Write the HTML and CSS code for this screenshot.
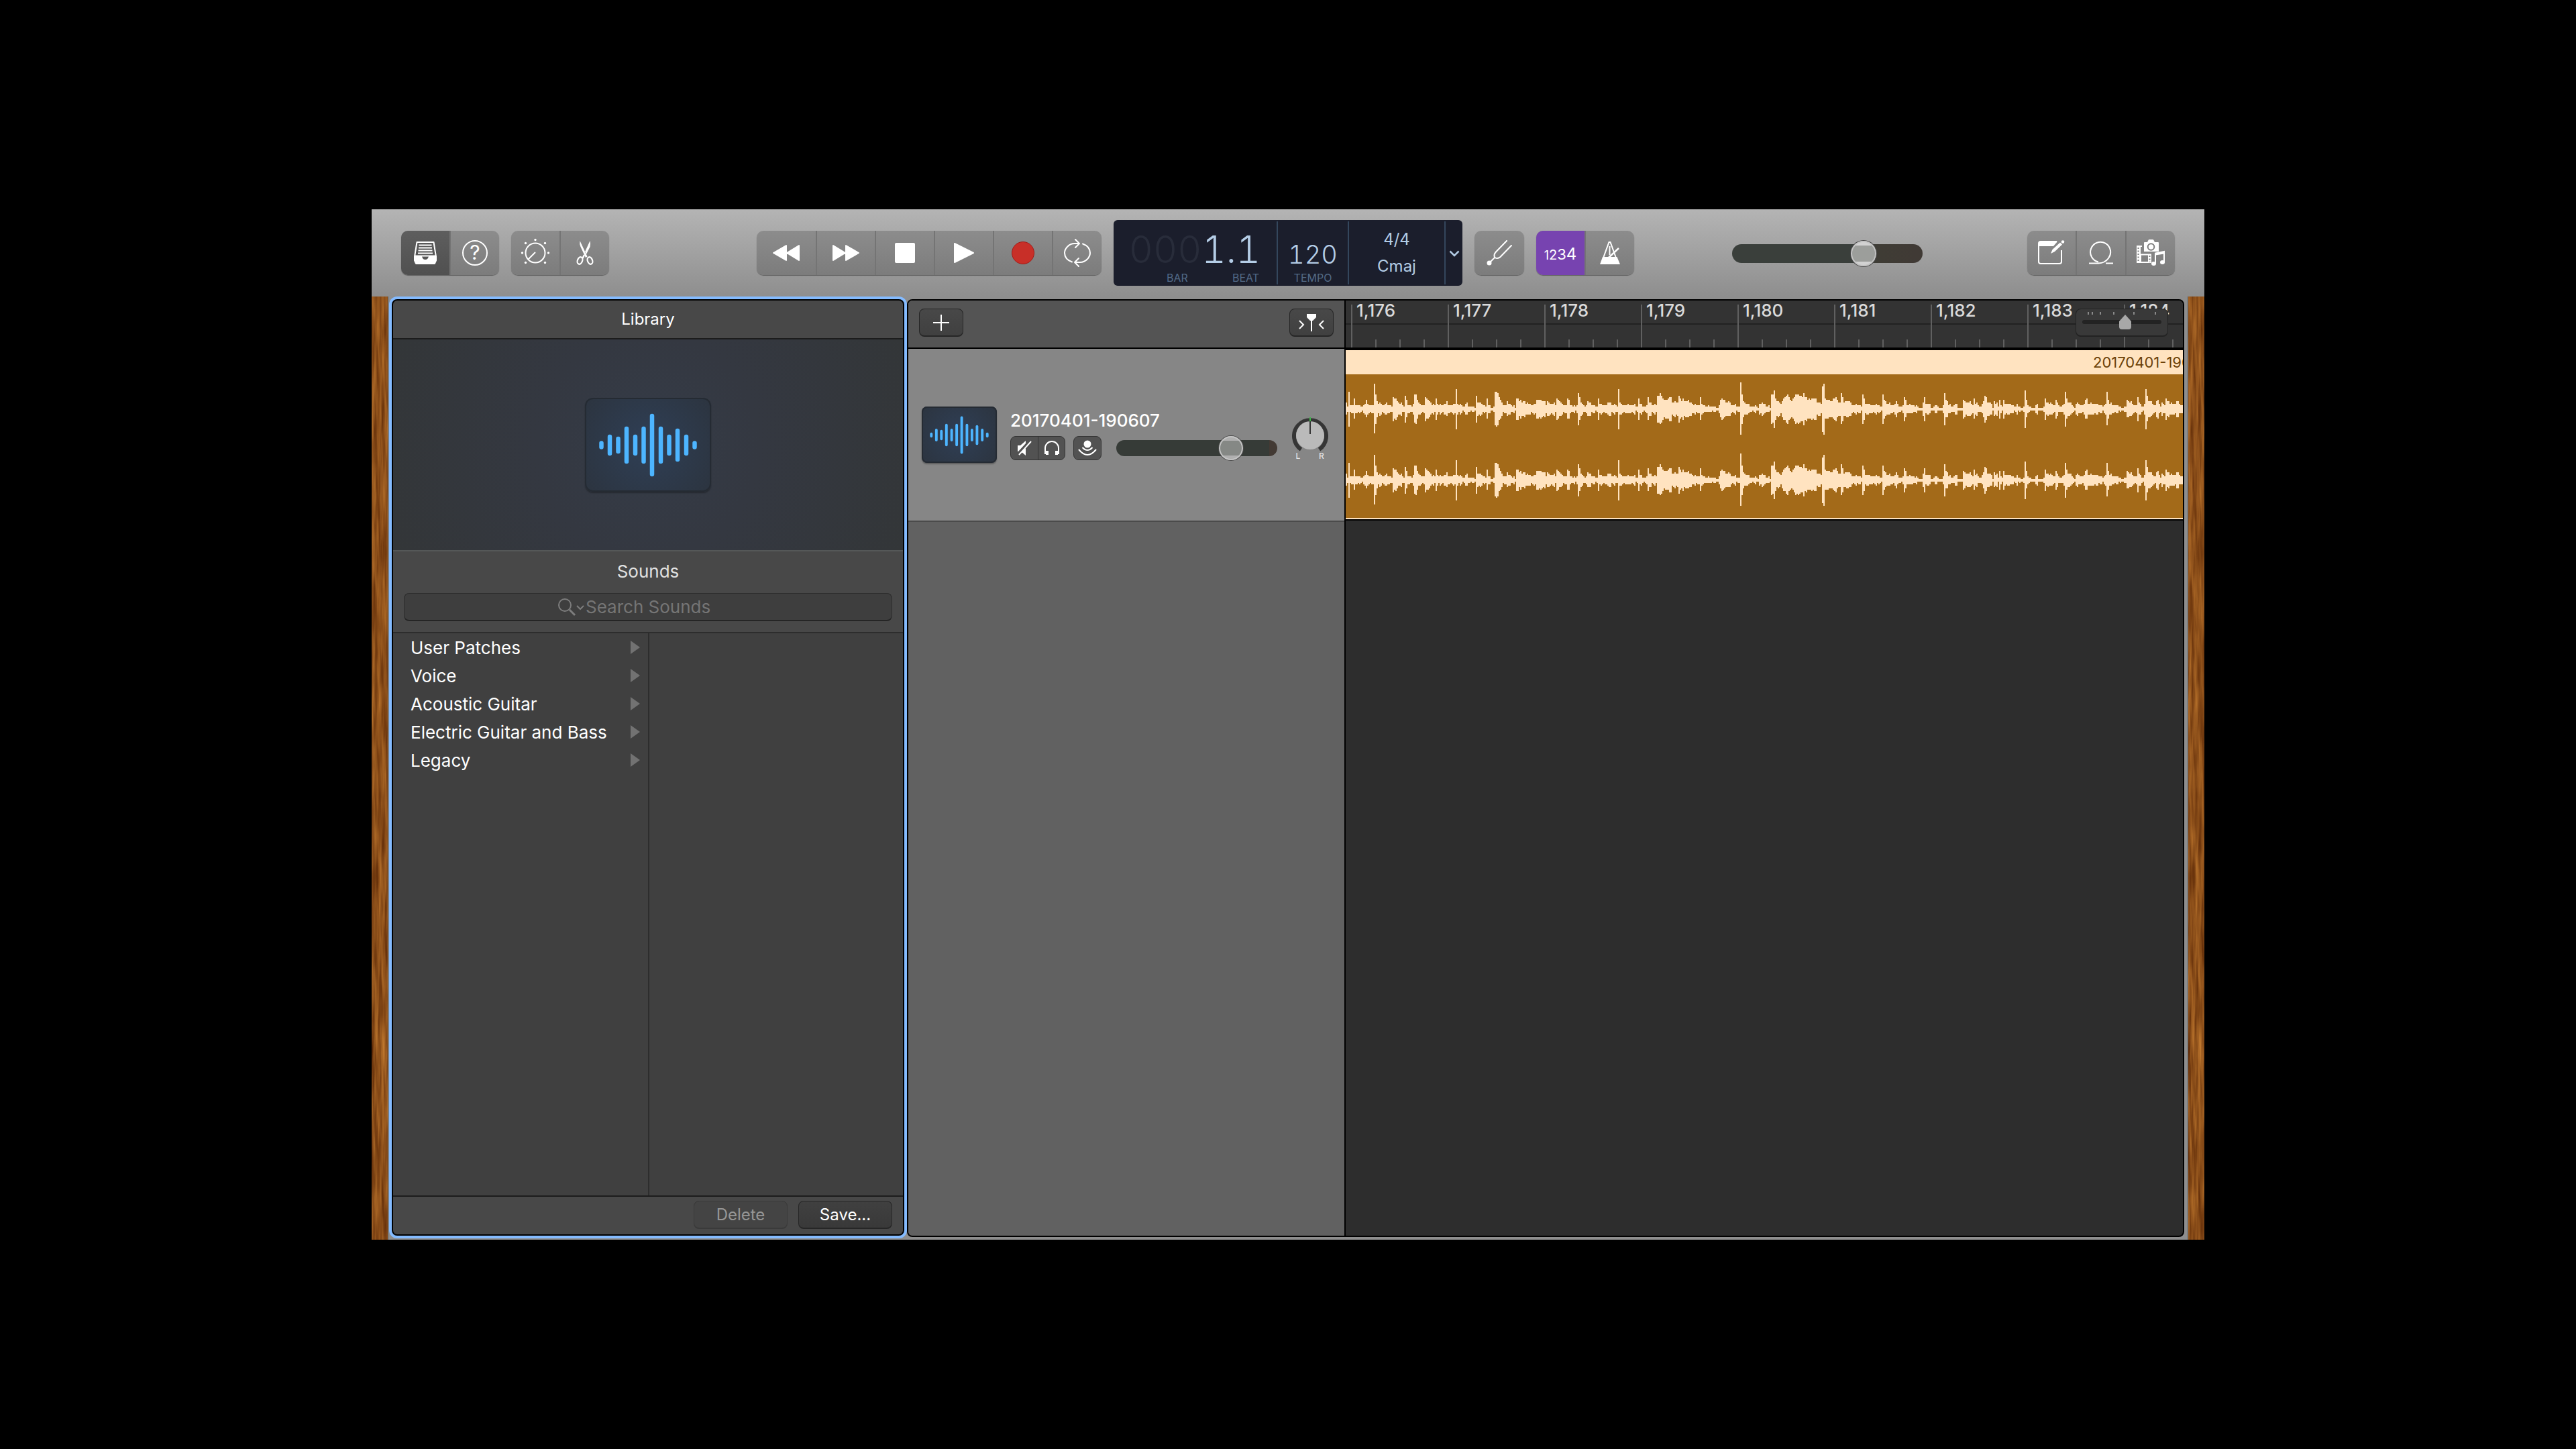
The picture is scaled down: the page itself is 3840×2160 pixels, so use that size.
FILE: index.html
```html
<!DOCTYPE html>
<html lang="en">
<head>
  <meta charset="UTF-8">
  <title>20170401-190607 - Tracks</title>
  <link rel="stylesheet" href="styles.css">
</head>
<body>
  <svg class="defs" aria-hidden="true">
    <defs>
      <filter id="wood-grain" x="0" y="0" width="100%" height="100%" color-interpolation-filters="sRGB">
        <feTurbulence type="fractalNoise" baseFrequency="0.2 0.012" numOctaves="3" seed="7" />
        <feColorMatrix type="matrix" values="0.5 0 0 0 0.3  0.4 0 0 0 0.11  0.2 0 0 0 0  0 0 0 0 1" />
      </filter>
      <symbol id="audio-wave" viewBox="0 0 146 95">
        <path d="M3.5 44.5v6M16 35v25M28.5 38v19M41 23v49M54 35v25M66.5 23v49M79 4v87M92 23v49M104.5 35v25M117 26v43M130 35v25M142.5 44.5v6" fill="none" stroke="#4db5ff" stroke-width="6.5" stroke-linecap="round" />
      </symbol>
    </defs>
  </svg>

  <main class="window">
    <header class="toolbar">
      <div class="button-group">
        <button class="tool active" aria-label="Library">
          <svg width="36" height="36" viewBox="-1 -1 36 36">
            <path d="M4.5 1h25l3.3 20.5H1.2z" fill="none" stroke="#fff" stroke-width="2" stroke-linejoin="round" />
            <path d="M7.5 5.5h19M7 9.5h20M6.5 13.5h21M6 17.5h22" stroke="#fff" stroke-width="2" />
            <path d="M0 21.5h11.5c1 0 .5 5.5 5.5 5.5s4.5-5.5 5.5-5.5H34v7L32 33q-.5 1-1.5 1h-27Q2.5 34 2 33L0 28.5z" fill="#fff" />
          </svg>
        </button>
        <button class="tool" aria-label="Quick Help">
          <svg width="40" height="40" viewBox="-20 -20 40 40">
            <circle r="18" fill="none" stroke="#fff" stroke-width="2" />
            <text class="help-mark" x="0" y="10" text-anchor="middle">?</text>
          </svg>
        </button>
      </div>
      <div class="button-group">
        <button class="tool" aria-label="Smart Controls">
          <svg width="44" height="44" viewBox="-22 -22 44 44">
            <circle r="14.5" fill="none" stroke="#fff" stroke-width="2" />
            <path d="M0-1L-10.5 9.5" stroke="#fff" stroke-width="2" />
            <g fill="#fff">
              <circle cx="-19.5" r="1.7" /><circle cx="19.5" r="1.7" /><circle cy="-19.5" r="1.7" />
              <circle cx="-14.5" cy="-14.5" r="1.7" /><circle cx="14.5" cy="-14.5" r="1.7" />
              <circle cx="-14.5" cy="14.5" r="1.7" /><circle cx="14.5" cy="14.5" r="1.7" />
            </g>
          </svg>
        </button>
        <button class="tool" aria-label="Editors">
          <svg width="28" height="38" viewBox="-14 -19 28 38">
            <path d="M-7.5-18q-1 5 1 9L1 7l2.5-1.5z M7.5-18q1.2 4 0 9L2.2 1.5-.3-1z" fill="#fff" />
            <path d="M-1 3L-3.5 8" stroke="#fff" stroke-width="2.5" />
            <ellipse cx="-7.5" cy="11.5" rx="3.6" ry="5.5" transform="rotate(22 -7.5 11.5)" fill="none" stroke="#fff" stroke-width="2.2" />
            <ellipse cx="7.5" cy="11.5" rx="3.6" ry="5.5" transform="rotate(-22 7.5 11.5)" fill="none" stroke="#fff" stroke-width="2.2" />
          </svg>
        </button>
      </div>

      <div class="spacer-left"></div>

      <div class="button-group transport">
        <button class="tool" aria-label="Rewind">
          <svg width="42" height="26" viewBox="0 0 42 26">
            <path d="M21 2v22L2 13zM40 2v22L22 13z" fill="#fff" stroke="#fff" stroke-width="2" stroke-linejoin="round" />
          </svg>
        </button>
        <button class="tool" aria-label="Forward">
          <svg width="42" height="26" viewBox="0 0 42 26">
            <path d="M21 2v22l19-11zM2 2v22l18-11z" fill="#fff" stroke="#fff" stroke-width="2" stroke-linejoin="round" />
          </svg>
        </button>
        <button class="tool" aria-label="Stop">
          <svg width="30" height="30" viewBox="0 0 30 30"><rect width="30" height="30" rx="2" fill="#fff" /></svg>
        </button>
        <button class="tool" aria-label="Play">
          <svg width="30" height="30" viewBox="0 0 30 30">
            <path d="M1 1v28l28-14z" fill="#fff" stroke="#fff" stroke-width="2" stroke-linejoin="round" />
          </svg>
        </button>
        <button class="tool" aria-label="Record">
          <svg width="34" height="34" viewBox="0 0 34 34"><circle cx="17" cy="17" r="16.5" fill="#c82f28" stroke="#a01c18" /></svg>
        </button>
        <button class="tool" aria-label="Cycle">
          <svg width="42" height="42" viewBox="-21 -21 42 42" fill="none" stroke="#fff" stroke-width="2" stroke-linecap="round" stroke-linejoin="round">
            <path d="M-8 13.5C-15 11-19 6-19 0S-13-14-4-14H3M-3-20l6 6-6 6" />
            <path d="M8-13.5C15-11 19-6 19 0S13 14 4 14H-4M2 8l-6 6 6 6" />
          </svg>
        </button>
      </div>

      <section class="lcd" aria-label="Transport display">
        <div class="lcd-position">
          <div class="lcd-value large"><span class="dim">000</span>1.1</div>
          <div class="lcd-labels"><span>BAR</span><span>BEAT</span></div>
        </div>
        <div class="lcd-tempo">
          <div class="lcd-value">120</div>
          <div class="lcd-labels"><span>TEMPO</span></div>
        </div>
        <div class="lcd-signature">
          <span>4/4</span>
          <span>Cmaj</span>
        </div>
        <button class="lcd-menu" aria-label="Display mode">
          <svg width="16" height="10" viewBox="0 0 16 10"><path d="M1.5 1.5L8 8l6.5-6.5" fill="none" stroke="#b4cde6" stroke-width="2.5" /></svg>
        </button>
      </section>

      <div class="button-group">
        <button class="tool" aria-label="Tuner">
          <svg width="38" height="38" viewBox="0 0 38 38" fill="none" stroke="#fff" stroke-width="2" stroke-linecap="round">
            <path d="M30 1L13.5 18q-3.5 4-1 8 4 2.5 8-1L37 8" />
            <path d="M12 26L5 33" />
            <circle cx="4" cy="34" r="2.5" fill="#fff" />
          </svg>
        </button>
      </div>
      <div class="button-group">
        <button class="tool count-in" aria-label="Count in"><span class="n1">1</span><span class="n2">2</span><span class="n3">3</span><span class="n4">4</span></button>
        <button class="tool" aria-label="Metronome">
          <svg width="32" height="36" viewBox="0 0 32 36">
            <path d="M6.5 24L14.5 2h2l8 22" fill="none" stroke="#fff" stroke-width="2" />
            <path d="M15.5 8v13" stroke="#fff" stroke-width="2" />
            <path d="M14 25L29 11" stroke="#fff" stroke-width="2.5" />
            <path d="M5 24h21.5L31 35H1z" fill="#fff" />
          </svg>
        </button>
      </div>

      <div class="spacer-middle"></div>
      <input class="volume master" type="range" min="0" max="100" value="72" aria-label="Master volume">
      <div class="spacer-right"></div>

      <div class="button-group">
        <button class="tool" aria-label="Note Pad">
          <svg width="40" height="38" viewBox="0 0 40 38">
            <path d="M35 15v17q0 3-3 3H4q-3 0-3-3V5q0-3 3-3h24" fill="none" stroke="#fff" stroke-width="2" />
            <path d="M1 9V5q0-3 3-3h25l-6 7z" fill="#fff" />
            <path d="M19 20l2.5-6L33 3.5l3 3L25 17z" fill="#fff" />
            <circle cx="37" cy="2.5" r="2.3" fill="#fff" />
          </svg>
        </button>
        <button class="tool" aria-label="Loop Browser">
          <svg width="36" height="36" viewBox="0 0 36 36" fill="none" stroke="#fff" stroke-width="2">
            <path d="M0 33.5H14Q24 33 29 26A15 15 0 1 0 14 31.5M25 33.5h11" />
          </svg>
        </button>
        <button class="tool" aria-label="Media Browser">
          <svg width="44" height="40" viewBox="0 0 44 40">
            <path d="M1 9h8v2H7v22h11V23h5v12H1z" fill="#fff" />
            <path d="M7 22.5h15V34H7z" fill="none" stroke="#fff" stroke-width="2" />
            <path d="M3.5 12v22M20.5 24v10" stroke="#7b7b7b" stroke-width="2" stroke-dasharray="2 2.5" />
            <path d="M12 5q0-1 1-1h4l1.5-3q.5-1 1.5-1h5q1 0 1.5 1L28 4h5q1 0 1 1v13H12z" fill="#fff" />
            <circle cx="22.5" cy="11" r="4.8" fill="none" stroke="#7d7d7d" stroke-width="2" />
            <path d="M29 36V20.5L42 18v16.5" fill="none" stroke="#fff" stroke-width="2" />
            <path d="M29 20l13-2v3.5l-13 2z" fill="#fff" />
            <ellipse cx="26.5" cy="36" rx="3.5" ry="3" fill="#fff" /><ellipse cx="39.5" cy="34" rx="3.5" ry="3" fill="#fff" />
          </svg>
        </button>
      </div>
    </header>

    <div class="workspace">
      <svg class="wood" aria-hidden="true"><rect width="100%" height="100%" filter="url(#wood-grain)" /></svg>

      <aside class="library">
        <h1 class="library-title">Library</h1>
        <div class="preview">
          <div class="preview-tile"><svg><use href="#audio-wave" /></svg></div>
        </div>
        <div class="sounds">
          <h2>Sounds</h2>
          <label class="search">
            <svg width="42" height="28" viewBox="0 0 42 28" fill="none" stroke="#7d7d7d" stroke-width="2">
              <circle cx="11" cy="11" r="9" />
              <path d="M18 18l8 8" stroke-width="3" />
              <path d="M29 12l5 5 5-5" />
            </svg>
            <input type="search" placeholder="Search Sounds" aria-label="Search Sounds">
          </label>
        </div>
        <div class="browser">
          <ul class="browser-column">
            <li><button>User Patches</button></li>
            <li><button>Voice</button></li>
            <li><button>Acoustic Guitar</button></li>
            <li><button>Electric Guitar and Bass</button></li>
            <li><button>Legacy</button></li>
          </ul>
        </div>
        <footer class="library-footer">
          <button class="push" disabled>Delete</button>
          <button class="push">Save...</button>
        </footer>
      </aside>

      <section class="arrange">
        <div class="track-list">
          <div class="track-list-bar">
            <button class="small-push" aria-label="Add track">
              <svg width="24" height="24" viewBox="0 0 24 24"><path d="M12 0v24M0 12h24" stroke="#fff" stroke-width="2" /></svg>
            </button>
            <button class="small-push" aria-label="Catch playhead">
              <svg width="40" height="28" viewBox="0 0 40 28">
                <path d="M13 1h14v5l-5 5h-1v16h-2V11h-1l-5-5z" fill="#fff" />
                <path d="M2 11l6 6-6 6M38 11l-6 6 6 6" fill="none" stroke="#fff" stroke-width="2" />
              </svg>
            </button>
          </div>
          <div class="track">
            <div class="track-icon"><svg><use href="#audio-wave" /></svg></div>
            <div class="track-info">
              <div class="track-name">20170401-190607</div>
              <div class="track-controls">
                <div class="track-buttons">
                  <button aria-label="Mute">
                    <svg width="24" height="24" viewBox="0 0 24 24">
                      <path d="M2 8h4l8-7v4L3 17H2zM14 12v11l-6-5z" fill="#fff" />
                      <path d="M22 2L4 22" stroke="#fff" stroke-width="2" />
                    </svg>
                  </button>
                  <button aria-label="Solo">
                    <svg width="24" height="24" viewBox="0 0 24 24">
                      <path d="M2 21V12a10 10 0 0 1 20 0v9" fill="none" stroke="#fff" stroke-width="2" />
                      <path d="M5 16v6M19 16v6" stroke="#fff" stroke-width="4" />
                    </svg>
                  </button>
                </div>
                <div class="track-buttons">
                  <button aria-label="Input monitoring">
                    <svg width="28" height="24" viewBox="0 0 28 24">
                      <circle cx="14" cy="6" r="5.5" fill="#fff" />
                      <path d="M6.5 11q7.5 8 15 0M1 14q13 16 26 0" fill="none" stroke="#fff" stroke-width="2" />
                    </svg>
                  </button>
                </div>
                <input class="volume" type="range" min="0" max="100" value="75" aria-label="Track volume">
              </div>
            </div>
            <label class="pan">
              <input type="range" min="-64" max="63" value="0" aria-label="Pan">
              <svg width="54" height="64" viewBox="0 0 54 64">
                <path d="M13.5 48A24 24 0 1 1 40.5 48" fill="none" stroke="#353535" stroke-width="6" />
                <circle cx="27" cy="27" r="21" fill="#bababa" />
                <path d="M27 6v19" stroke="#333" stroke-width="2" />
                <path d="M27 0v6" stroke="#3fb54a" stroke-width="2" />
                <text x="9" y="62" text-anchor="middle">L</text>
                <text x="44" y="62" text-anchor="middle">R</text>
              </svg>
            </label>
          </div>
        </div>

        <div class="timeline">
          <div class="ruler">
            <ol class="bars">
              <li>1,176</li>
              <li>1,177</li>
              <li>1,178</li>
              <li>1,179</li>
              <li>1,180</li>
              <li>1,181</li>
              <li>1,182</li>
              <li>1,183</li>
              <li>1,184</li>
            </ol>
            <div class="zoom">
              <svg width="120" height="4" viewBox="0 0 120 4"><path d="M9 0v4M15 0v4M27 0v4M47 0v4M77 0v4M109 0v4" stroke="#8a8a8a" stroke-width="2" /></svg>
              <input type="range" min="0" max="100" value="55" aria-label="Horizontal zoom">
            </div>
          </div>
          <div class="region">
            <div class="region-header"><span>20170401-190607</span></div>
            <div class="region-body">
              <svg class="channel" preserveAspectRatio="none"></svg>
              <svg class="channel" preserveAspectRatio="none"></svg>
            </div>
          </div>
        </div>
      </section>

      <svg class="wood right" aria-hidden="true"><rect width="100%" height="100%" filter="url(#wood-grain)" /></svg>
    </div>
  </main>

  <script src="waveform.js"></script>
</body>
</html>
```
FILE: styles.css
```css
:root {
  --focus: #84bbff;
  --panel: #484848;
  --panel-dark: #404040;
  --line: #1c1c1c;
  --region: #a36a19;
  --region-light: #ffe3c0;
  --lcd-bg: #1b1e2c;
  --lcd-text: #b4cde6;
  --lcd-label: #536a87;
}

* {
  box-sizing: border-box;
  margin: 0;
  padding: 0;
}

body {
  height: 100vh;
  padding: 312px 554px;
  background-color: #000;
  color: #fff;
  font-family: Inter, "Liberation Sans", sans-serif;
  font-size: 26px;
}

button,
input {
  font: inherit;
  color: inherit;
}

button {
  border: none;
  background: none;
  cursor: pointer;
}

ul,
ol {
  list-style: none;
}

.defs {
  position: absolute;
  width: 0;
  height: 0;
}

.window {
  display: flex;
  flex-direction: column;
  height: 100%;
  background-color: #8e8e8e;
}

/* Toolbar */

.toolbar {
  display: flex;
  align-items: center;
  gap: 18px;
  height: 130px;
  padding: 0 44px;
  background: linear-gradient(#b4b4b4, #8e8e8e);
}

.spacer-left {
  flex: 184 1 0;
}

.spacer-middle {
  flex: 110 1 0;
}

.spacer-right {
  flex: 120 1 0;
}

.button-group {
  display: flex;
  height: 66px;
  border-radius: 10px;
  overflow: hidden;
  background: linear-gradient(#8c8c8c, #7c7c7c);
  box-shadow: 0 1px 1px #5c5c5c;
}

.tool {
  display: flex;
  align-items: center;
  justify-content: center;
  width: 72px;
}

.tool:only-child {
  width: 74px;
}

.tool + .tool {
  width: 74px;
  border-left: 2px solid #747474;
}

.tool.active {
  background: linear-gradient(#5e5e5e, #505050);
}

.transport .tool {
  width: 88px;
}

.transport .tool:last-child {
  width: 74px;
}

.help-mark {
  fill: #fff;
  font-size: 30px;
}

.count-in {
  align-items: baseline;
  padding-top: 20px;
  background-color: #7743b0;
}

.n1 {
  font-size: 18px;
}

.n2 {
  font-size: 20px;
}

.n3 {
  font-size: 22px;
}

.n4 {
  font-size: 24px;
}

/* LCD */

.lcd {
  display: flex;
  width: 520px;
  height: 98px;
  padding: 2px 0;
  border-radius: 6px;
  background-color: var(--lcd-bg);
  color: var(--lcd-text);
}

.lcd > div {
  display: flex;
  flex-direction: column;
  border-right: 2px solid #34475d;
}

.lcd-position,
.lcd-tempo {
  justify-content: flex-end;
  padding-bottom: 2px;
}

.lcd-position {
  width: 245px;
  align-items: flex-end;
}

.lcd-tempo {
  width: 106px;
  align-items: center;
}

.lcd-value {
  margin-bottom: 12px;
  font-size: 38px;
  font-weight: 300;
  font-variant-numeric: tabular-nums;
  line-height: 30px;
}

.lcd-value.large {
  padding-right: 24px;
  font-size: 56px;
  line-height: 44px;
}

.dim {
  color: #282c3a;
}

.lcd-labels {
  display: flex;
  gap: 66px;
  color: var(--lcd-label);
  font-size: 16px;
  line-height: 16px;
}

.lcd-position .lcd-labels {
  padding-right: 26px;
}

.lcd-signature {
  width: 144px;
  align-items: center;
  justify-content: center;
  font-size: 24px;
  line-height: 40px;
}

.lcd-menu {
  flex: 1;
  padding-bottom: 8px;
}

/* Volume sliders */

.volume {
  flex: 1;
  min-width: 0;
  height: 24px;
  margin-left: 10px;
  appearance: none;
  border-radius: 12px;
  background: linear-gradient(90deg, #363b37 95%, #433a34 95%);
}

.volume::-webkit-slider-thumb {
  appearance: none;
  width: 36px;
  height: 36px;
  border: 2px solid #c4c4c4;
  border-radius: 50%;
  background: linear-gradient(#b0b0b0 17%, #858885 17%, #858885 83%, #b0b0b0 83%);
  box-shadow: 0 0 0 1px #4a4a4a;
}

.volume.master {
  flex: none;
  width: 284px;
  height: 28px;
  margin: 2px 0 0;
  border-radius: 14px;
  background: linear-gradient(90deg, #3a3f3b 66%, #3f3c35 78%, #403a35 96%);
}

.volume.master::-webkit-slider-thumb {
  width: 38px;
  height: 38px;
  background: linear-gradient(#d2d2d2 14%, #9c9e9b 14%, #9c9e9b 86%, #d2d2d2 86%);
}

/* Workspace */

.workspace {
  display: flex;
  flex: 1;
  min-height: 0;
}

.wood {
  width: 24px;
  height: 100%;
  margin-right: 2px;
  box-shadow: 1px 0 0 #5d5d5d;
}

.wood.right {
  margin: 0 0 0 6px;
  box-shadow: -1px 0 0 #5d5d5d;
}

/* Library */

.library {
  display: flex;
  flex-direction: column;
  width: 772px;
  margin-bottom: 2px;
  border: 4px solid var(--focus);
  border-radius: 12px;
  background-color: #000;
  padding: 2px;
}

.library > :first-child {
  border-radius: 6px 6px 0 0;
}

.library > :last-child {
  border-radius: 0 0 6px 6px;
}

.library-title,
.sounds h2 {
  font-size: 26px;
  font-weight: 400;
  text-align: center;
}

.library-title {
  border-bottom: 2px solid var(--line);
  background-color: var(--panel);
  font-size: 24px;
  line-height: 56px;
}

.preview {
  display: flex;
  align-items: center;
  justify-content: center;
  height: 314px;
  background: radial-gradient(circle, #353c48 0, #343841 40%, #333638 100%);
}

.preview-tile,
.track-icon {
  display: flex;
  align-items: center;
  justify-content: center;
  background: radial-gradient(circle, #2f3f56, #2c343f);
  box-shadow: inset 0 0 0 2px #252b33, 0 2px 2px rgba(0, 0, 0, 0.3);
}

.preview-tile {
  width: 188px;
  height: 140px;
  border-radius: 12px;
}

.preview-tile svg {
  width: 146px;
  height: 95px;
}

.sounds {
  padding: 0 16px 16px;
  border-top: 2px solid #555858;
  border-bottom: 2px solid #2d2d2d;
  background-color: var(--panel);
}

.sounds h2 {
  margin-bottom: 2px;
  color: #e0e0e0;
  line-height: 60px;
}

.search {
  display: flex;
  align-items: center;
  height: 42px;
  padding-left: 228px;
  border: 1px solid #2c2c2c;
  border-bottom: 2px solid #252525;
  border-radius: 8px;
  background-color: #3e3e3e;
}

.search input {
  flex: 1;
  min-width: 0;
  border: none;
  outline: none;
  background: none;
}

.search input::placeholder {
  color: #757575;
}

.browser {
  display: flex;
  flex: 1;
  background-color: var(--panel-dark);
}

.browser-column {
  width: 382px;
  border-right: 2px solid #2d2d2d;
}

.browser-column button {
  display: flex;
  align-items: center;
  justify-content: space-between;
  width: 100%;
  height: 42px;
  padding: 0 12px 0 26px;
}

.browser-column button::after {
  content: "";
  border: solid transparent;
  border-width: 10px 0 10px 14px;
  border-left-color: #727272;
}

.library-footer {
  display: flex;
  justify-content: flex-end;
  gap: 16px;
  padding: 6px 16px 8px;
  border-top: 2px solid var(--line);
  background-color: var(--panel);
}

.push,
.small-push {
  height: 42px;
  border: 1px solid #262626;
  border-bottom-width: 2px;
  border-radius: 8px;
  background: linear-gradient(#404040, #393939);
}

.push {
  width: 140px;
  font-size: 24px;
}

.push:disabled {
  border-color: #3a3a3a;
  background: #444;
  color: #969696;
}

/* Arrange area */

.arrange {
  display: flex;
  flex: 1;
  min-width: 0;
  margin: 4px 0;
  border: 2px solid #000;
  border-radius: 8px;
  overflow: hidden;
  background-color: #2d2d2d;
}

.track-list {
  width: 652px;
  border-right: 2px solid #000;
  background-color: #616161;
}

.track-list-bar {
  display: flex;
  align-items: center;
  justify-content: space-between;
  height: 72px;
  padding: 0 16px 4px;
  border-bottom: 2px solid #000;
  background-color: #545454;
}

.small-push {
  display: flex;
  align-items: center;
  justify-content: center;
  width: 66px;
  background: linear-gradient(#484848, #404040);
}

.track {
  display: flex;
  align-items: flex-start;
  height: 258px;
  padding: 86px 24px 0 20px;
  border-bottom: 2px solid #4b4b4b;
  background-color: #868686;
}

.track-icon {
  width: 112px;
  height: 84px;
  border-radius: 8px;
}

.track-icon svg {
  width: 88px;
  height: 57px;
}

.track-info {
  flex: 1;
  min-width: 0;
  margin: 0 22px 0 20px;
}

.track-name {
  margin-bottom: 2px;
  font-weight: 500;
  line-height: 42px;
}

.track-controls {
  display: flex;
  align-items: center;
  gap: 12px;
}

.track-buttons {
  display: flex;
  height: 36px;
  border: 1px solid #333;
  border-radius: 8px;
  background-color: #525252;
}

.track-buttons button {
  display: flex;
  align-items: center;
  justify-content: center;
  width: 40px;
}

.track-buttons button + button {
  border-left: 1px solid #333;
}

.pan {
  position: relative;
  margin-top: 16px;
}

.pan input {
  position: absolute;
  inset: 0;
  width: 100%;
  opacity: 0;
}

.pan svg {
  display: block;
}

.pan text {
  fill: #e4e4e4;
  font-size: 12px;
  font-weight: 500;
}

/* Timeline */

.timeline {
  flex: 1;
  min-width: 0;
}

.ruler {
  position: relative;
  height: 70px;
  overflow: hidden;
  background: linear-gradient(#333 34px, #222 34px, #222 36px, #333 36px);
}

.bars {
  display: flex;
  height: 64px;
  margin-top: 6px;
  padding-left: 8px;
}

.bars li {
  flex: none;
  width: 144px;
  padding-left: 6px;
  border-left: 2px solid #606060;
  background: repeating-linear-gradient(90deg, transparent 0 34px, #606060 34px 36px) 0 100% / 142px 12px no-repeat;
  color: #dadada;
  font-weight: 500;
  line-height: 18px;
}

.zoom {
  position: absolute;
  top: 12px;
  right: 22px;
  width: 138px;
  height: 42px;
  padding: 4px 9px;
  border: 1px solid #222;
  border-bottom-width: 2px;
  border-radius: 8px;
  background-color: #393939;
}

.zoom svg {
  display: block;
}

.zoom input {
  display: block;
  width: 100%;
  height: 22px;
  appearance: none;
  background: none;
}

.zoom input::-webkit-slider-runnable-track {
  height: 6px;
  border-radius: 3px;
  background-color: #232323;
}

.zoom input::-webkit-slider-thumb {
  appearance: none;
  width: 18px;
  height: 22px;
  margin-top: -8px;
  border-radius: 4px;
  background-color: #a8a8a8;
  clip-path: polygon(50% 0, 100% 45%, 100% 100%, 0 100%, 0 45%);
}

.region {
  border: solid #000;
  border-width: 4px 0 2px;
  background-color: var(--region);
}

.region-header {
  height: 36px;
  overflow: hidden;
  background-color: var(--region-light);
  color: #6b4108;
  font-size: 22px;
  line-height: 36px;
  white-space: nowrap;
}

.region-header span {
  margin-left: calc(100% - 134px);
}

.region-body {
  height: 216px;
  border-bottom: 2px solid var(--region-light);
}

.channel {
  display: block;
  width: 100%;
  height: 106px;
  fill: var(--region-light);
}
```
FILE: waveform.js
```js
// Peaks as position, level pairs. Both channels share them.
const peaks = [
  38,24, 43,12, 48,78, 52,42, 57,18, 66,10, 68,48, 71,18, 95,12, 107,24, 111,36, 116,22, 135,12,
  138,114, 143,66, 148,36, 155,24, 175,18, 180,24, 188,18, 200,14, 207,6, 209,48, 216,48, 221,36,
  230,18, 235,30, 240,18, 247,12, 248,60, 252,36, 258,20, 275,12, 281,66, 289,66, 290,42, 297,30,
  304,18, 317,18, 319,54, 325,42, 338,30, 345,18, 355,18, 357,48, 362,26, 370,16, 395,28, 400,18,
  420,18, 424,24, 428,90, 432,24, 440,20, 460,10, 464,24, 472,12, 495,7, 500,60, 505,30, 515,24,
  525,18, 537,12, 539,42, 545,18, 555,7, 567,2, 570,78, 576,72, 581,54, 587,36, 595,20, 607,18,
  610,30, 617,26, 625,15, 637,6, 640,0, 642,48, 648,48, 653,36, 662,32, 670,36, 678,24, 700,18,
  712,24, 715,42, 730,36, 745,34, 750,20, 755,30, 765,24, 783,20, 785,48, 792,40, 800,24, 810,20,
  822,18, 823,42, 830,42, 832,20, 845,12, 858,15, 861,72, 866,54, 872,24, 885,14, 897,30, 905,30,
  912,16, 930,12, 932,48, 937,24, 945,15, 960,20, 972,30, 982,18, 1000,14, 1004,90, 1008,30,
  1015,15, 1035,18, 1050,20, 1073,10, 1075,48, 1080,24, 1090,12, 1107,18, 1108,48, 1115,30,
  1125,15, 1142,18, 1145,60, 1152,72, 1157,54, 1165,42, 1182,42, 1184,54, 1192,54, 1194,32,
  1205,30, 1215,32, 1217,60, 1222,48, 1228,32, 1232,46, 1240,36, 1255,32, 1270,20, 1290,18,
  1294,54, 1298,18, 1320,12, 1355,7, 1360,18, 1365,42, 1376,42, 1385,30, 1400,30, 1405,20,
  1430,10, 1434,10, 1436,120, 1441,60, 1446,36, 1455,24, 1470,12, 1500,8, 1506,24, 1520,24,
  1530,12, 1545,6, 1549,66, 1555,84, 1560,40, 1569,36, 1579,24, 1589,48, 1602,66, 1606,50,
  1616,36, 1622,48, 1637,66, 1649,60, 1656,48, 1660,72, 1666,54, 1676,42, 1697,48, 1709,32,
  1721,24, 1725,96, 1731,114, 1734,48, 1744,40, 1762,35, 1766,48, 1775,48, 1784,30, 1791,32,
  1793,72, 1798,48, 1804,32, 1812,38, 1824,30, 1834,20, 1854,18, 1866,12, 1868,60, 1874,48,
  1879,24, 1894,20, 1914,18, 1937,12, 1940,60, 1946,42, 1956,24, 1974,18, 1989,30, 1999,14,
  2014,12, 2016,54, 2022,42, 2027,18, 2044,18, 2069,6, 2081,4, 2083,26, 2087,54, 2092,26,
  2102,22, 2114,6, 2124,15, 2144,6, 2156,10, 2158,72, 2164,42, 2172,18, 2184,10, 2196,24,
  2209,6, 2224,6, 2226,36, 2239,30, 2254,26, 2261,18, 2264,48, 2270,24, 2282,10, 2294,24,
  2300,60, 2306,54, 2312,30, 2324,24, 2332,6, 2334,36, 2342,22, 2349,10, 2353,42, 2359,18,
  2364,10, 2367,36, 2374,26, 2394,20, 2409,10, 2414,18, 2429,7, 2441,4, 2444,84, 2449,42,
  2454,18, 2464,6, 2479,6, 2484,18, 2494,7, 2511,4, 2514,48, 2520,30, 2529,24, 2549,18,
  2552,42, 2559,24, 2566,12, 2584,18, 2587,78, 2592,48, 2599,32, 2609,18, 2622,4, 2626,24,
  2644,18, 2656,18, 2658,42, 2662,48, 2667,26, 2684,24, 2709,18, 2729,7, 2732,24, 2734,78,
  2739,42, 2746,22, 2759,18, 2779,10, 2789,4, 2802,10, 2804,42, 2814,32, 2829,20, 2839,20,
  2843,48, 2848,30, 2859,12, 2869,20, 2872,90, 2878,60, 2884,36, 2894,24, 2904,15, 2911,36,
  2924,14, 2929,30, 2939,14, 2942,48, 2949,36, 2959,24, 2974,26, 2981,36, 2989,22, 3003,14
];

const START = peaks[0];
const END = peaks[peaks.length - 2];
const COLUMNS = 624;

function levelAt(from, to) {
  let inside = 0;
  for (let i = 0; i < peaks.length; i += 2) {
    if (peaks[i] >= from && peaks[i] < to) inside = Math.max(inside, peaks[i + 1]);
  }
  if (inside) return inside;
  for (let i = 2; i < peaks.length; i += 2) {
    if (peaks[i] >= from) {
      const t = (from - peaks[i - 2]) / (peaks[i] - peaks[i - 2]);
      return peaks[i - 1] + t * (peaks[i + 1] - peaks[i - 1]);
    }
  }
  return 0;
}

let upper = '';
let lower = '';
const step = (END - START) / COLUMNS;
for (let i = 0; i < COLUMNS; i++) {
  const x = START + i * step;
  const ripple = (i * 7) % 5 === 0 ? 2 : 0;
  const level = Math.max(2, Math.round(levelAt(x, x + step) / 6) * 2 + ripple);
  const low = Math.max(2, level - ((i * 11) % 3 === 0 ? 2 : 0));
  upper += `V${52 - level}H${i * 2 + 2}`;
  lower = `H${i * 2 + 2}V${52 + low}` + lower;
}

document.querySelectorAll('.channel').forEach((svg) => {
  svg.setAttribute('viewBox', `0 0 ${COLUMNS * 2} 106`);
  svg.innerHTML = `<path shape-rendering="crispEdges" d="M0 52${upper}${lower}H0Z"/>`;
});
```
